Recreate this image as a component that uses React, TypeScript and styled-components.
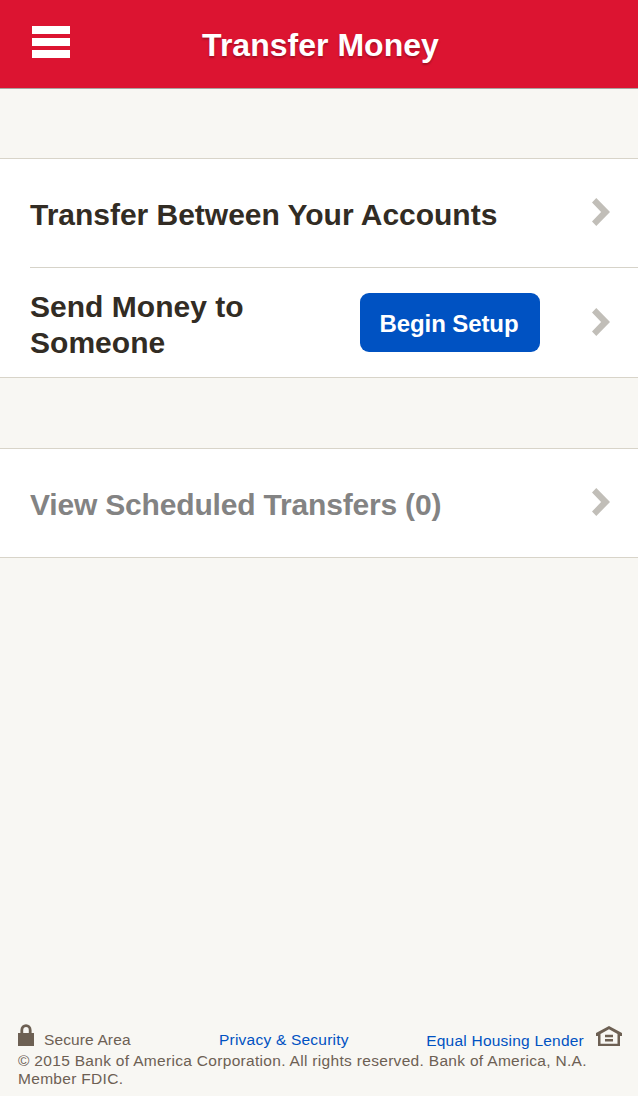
import React from "react";
import styled, { createGlobalStyle } from "styled-components";

const GlobalStyle = createGlobalStyle`
  * { box-sizing: border-box; }
  body {
    margin: 0;
    background: #f8f7f3;
    font-family: "Liberation Sans", Arial, sans-serif;
  }
`;

const Screen = styled.div`
  display: flex;
  flex-direction: column;
  min-height: 1096px;
  background: #f8f7f3;
`;

const Header = styled.header`
  display: grid;
  grid-template-columns: 102px 1fr 102px;
  height: 89px;
  background: #dc1431;
  border-bottom: 1px solid #a8a5a0;
`;

const MenuButton = styled.button`
  display: flex;
  flex-direction: column;
  gap: 4px;
  padding: 26px 32px 0;
  border: 0;
  background: none;
`;

const MenuBar = styled.span`
  width: 38px;
  height: 8px;
  background: #fff;
`;

const Title = styled.h1`
  margin: 0;
  padding-left: 3px;
  text-align: center;
  color: #fff;
  font-size: 32px;
  line-height: 90px;
  letter-spacing: 0.02px;
  white-space: nowrap;
  text-shadow: 0 2px 2px rgba(0, 0, 0, 0.25);
`;

const List = styled.section`
  margin-top: 69px;
  background: #fff;
  border-top: 1px solid #d8d4c9;
  border-bottom: 1px solid #d8d4c9;

  & + & {
    margin-top: 70px;
  }
`;

const Row = styled.div<{ $divided?: boolean }>`
  display: flex;
  align-items: center;
  height: ${(p) => (p.$divided ? 110 : 108)}px;
  margin-left: 30px;
  padding: ${(p) => (p.$divided ? "0 28px 1px 0" : "0 28px 2px 0")};
  ${(p) => p.$divided && "border-top: 1px solid #d6d3c9;"}
`;

const Label = styled.span<{ $muted?: boolean; $width?: number; $spacing: number }>`
  width: ${(p) => (p.$width ? `${p.$width}px` : "auto")};
  padding-top: 6px;
  color: ${(p) => (p.$muted ? "#838383" : "#322c24")};
  font-size: 30px;
  font-weight: 700;
  line-height: 36px;
  letter-spacing: ${(p) => p.$spacing}px;
`;

const SetupButton = styled.button`
  width: 180px;
  height: 59px;
  padding: 3px 2px 0 0;
  border: 0;
  border-radius: 9px;
  background: #0052c2;
  color: #fff;
  font: 700 24px "Liberation Sans", Arial, sans-serif;
  letter-spacing: -0.1px;
`;

const ChevronIcon = styled.svg`
  flex: none;
  margin-left: auto;
`;

const Footer = styled.footer`
  margin-top: auto;
  padding: 0 16px 8px 18px;
  color: #6d6053;
  font-size: 15.5px;
  line-height: 18px;
`;

const FooterLinks = styled.div`
  display: flex;
  height: 29px;
`;

const Secure = styled.span`
  display: flex;
  width: 201px;
  gap: 10px;
  letter-spacing: 0.12px;
`;

const FooterText = styled.span`
  padding-top: 8px;
`;

const FooterLink = styled.a<{ $offset: number; $spacing: number }>`
  padding-top: ${(p) => p.$offset}px;
  color: #0052c2;
  letter-spacing: ${(p) => p.$spacing}px;
  white-space: nowrap;
`;

const Lender = styled.span`
  display: flex;
  margin-left: auto;
  gap: 12px;
`;

const HouseIcon = styled.svg`
  margin-top: 3px;
`;

const Legal = styled.p`
  margin: 0;
  letter-spacing: 0.31px;
  white-space: nowrap;
`;

const Chevron = () => (
  <ChevronIcon width="18" height="28" viewBox="0 0 18 28">
    <path d="M4.3 0 18 14 4.3 28 0 23.6 9.1 14 0 4.4Z" fill="#c1beb8" />
  </ChevronIcon>
);

export default function App() {
  return (
    <Screen>
      <GlobalStyle />
      <Header>
        <MenuButton aria-label="Menu">
          <MenuBar />
          <MenuBar />
          <MenuBar />
        </MenuButton>
        <Title>Transfer Money</Title>
      </Header>
      <List>
        <Row>
          <Label $spacing={-0.02}>Transfer Between Your Accounts</Label>
          <Chevron />
        </Row>
        <Row $divided>
          <Label $width={330} $spacing={0.03}>
            Send Money to
            <br />
            Someone
          </Label>
          <SetupButton>Begin Setup</SetupButton>
          <Chevron />
        </Row>
      </List>
      <List>
        <Row>
          <Label $muted $spacing={-0.18}>View Scheduled Transfers (0)</Label>
          <Chevron />
        </Row>
      </List>
      <Footer>
        <FooterLinks>
          <Secure>
            <svg width="16" height="23" viewBox="0 0 16 23">
              <path d="M3.8 11V7.2C3.8 1.1 12.2 1.1 12.2 7.2V11" fill="none" stroke="#6d6053" strokeWidth="2.8" />
              <path d="M0 10H16V23H0Z" fill="#6d6053" />
            </svg>
            <FooterText>Secure Area</FooterText>
          </Secure>
          <FooterLink $offset={8} $spacing={0.22}>Privacy &amp; Security</FooterLink>
          <Lender>
            <FooterLink $offset={9} $spacing={0.22}>Equal Housing Lender</FooterLink>
            <HouseIcon width="26" height="20" viewBox="0 0 26 20">
              <path d="M0 7 13 0 26 7V10H24V20H2V10H0ZM4.5 8V17.7H21.5V8L13 3.2Z" fill="#6d6053" fillRule="evenodd" />
              <path d="M9 8.7H17V11.2H9ZM9 13H17V15.5H9Z" fill="#6d6053" />
            </HouseIcon>
          </Lender>
        </FooterLinks>
        <Legal>© 2015 Bank of America Corporation. All rights reserved. Bank of America, N.A.</Legal>
        <Legal>Member FDIC.</Legal>
      </Footer>
    </Screen>
  );
}
